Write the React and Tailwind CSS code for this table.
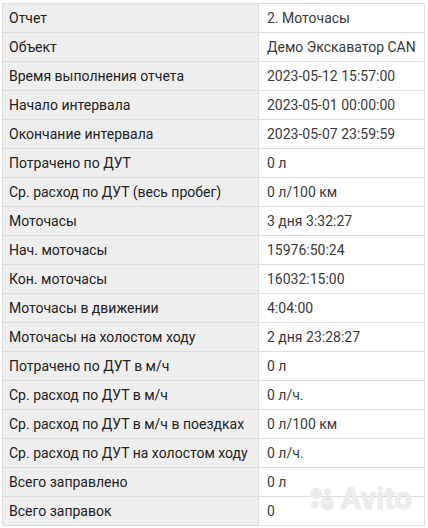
import React from 'react';

const rows = [
  ['Отчет', '2. Моточасы'],
  ['Объект', 'Демо Экскаватор CAN'],
  ['Время выполнения отчета', '2023-05-12 15:57:00'],
  ['Начало интервала', '2023-05-01 00:00:00'],
  ['Окончание интервала', '2023-05-07 23:59:59'],
  ['Потрачено по ДУТ', '0 л'],
  ['Ср. расход по ДУТ (весь пробег)', '0 л/100 км'],
  ['Моточасы', '3 дня 3:32:27'],
  ['Нач. моточасы', '15976:50:24'],
  ['Кон. моточасы', '16032:15:00'],
  ['Моточасы в движении', '4:04:00'],
  ['Моточасы на холостом ходу', '2 дня 23:28:27'],
  ['Потрачено по ДУТ в м/ч', '0 л'],
  ['Ср. расход по ДУТ в м/ч', '0 л/ч.'],
  ['Ср. расход по ДУТ в м/ч в поездках', '0 л/100 км'],
  ['Ср. расход по ДУТ на холостом ходу', '0 л/ч.'],
  ['Всего заправлено', '0 л'],
  ['Всего заправок', '0'],
];

const App = () => {
  return (
    <div className="relative w-[428px] h-[528px] bg-white pt-[3px] pl-[2px]" style={{ fontFamily: 'Roboto, "Noto Sans", sans-serif' }}>
      <div className="w-[423px] border-t border-l border-[#dddddd]">
        {rows.map(([label, value], i) => (
          <div key={i} className="flex h-[29px] border-b border-[#dddddd]">
            <div className="w-[256px] shrink-0 flex items-center pl-[6px] bg-[#eeeeee] border-r border-[#dddddd] text-[14px] text-[#222222] whitespace-nowrap">
              {label}
            </div>
            <div className="flex-1 flex items-center pl-[8px] border-r border-[#dddddd] text-[14px] text-[#3a3a3a] whitespace-nowrap">
              {value}
            </div>
          </div>
        ))}
      </div>
      {/* watermark */}
      <div className="absolute right-[16px] bottom-[6px] flex items-center gap-[2px] text-[#ececec] text-[31px] font-bold" style={{ textShadow: '0 0 2px rgba(0,0,0,0.12)' }}>
        <svg width="30" height="26" viewBox="0 0 26 22">
          <circle cx="7" cy="6" r="5" fill="#ececec" />
          <circle cx="17" cy="5" r="3" fill="#ececec" />
          <circle cx="6" cy="16" r="3.5" fill="#ececec" />
          <circle cx="17" cy="15" r="6" fill="#ececec" />
        </svg>
        <span>Avito</span>
      </div>
    </div>
  );
};

export default App;
